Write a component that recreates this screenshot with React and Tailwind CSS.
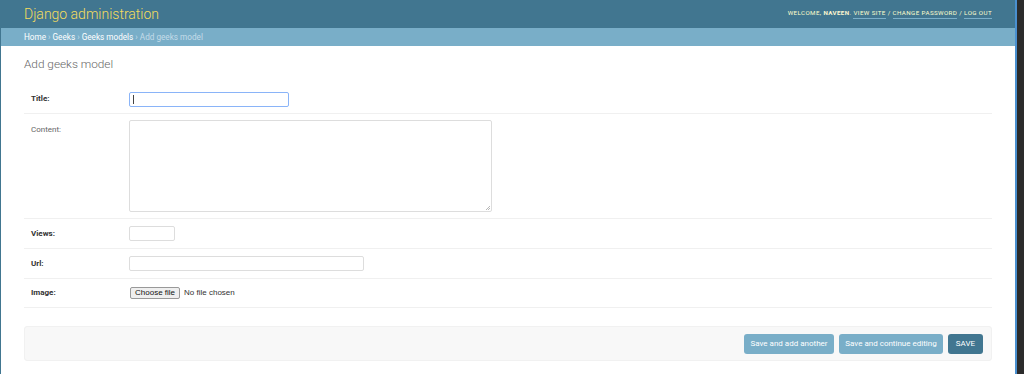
export default function App() {
  const font = { fontFamily: 'Roboto, "Liberation Sans", sans-serif' };
  return (
    <div className="flex w-[1024px] h-[374px] bg-[#2b2b2b] overflow-hidden" style={font}>
      <div className="flex flex-col w-[1015px] h-full bg-white border-l border-[#417690]">
        <div className="flex items-center justify-between h-[28px] bg-[#417690] pl-[23px] pr-[23px]">
          <div className="text-[14px] font-light text-[#f5dd5d] leading-none pb-[1px]">Django administration</div>
          <div className="text-[6.2px] tracking-[0.4px] text-[#ffc] uppercase leading-none pb-[2px]">
            WELCOME, <span className="font-bold text-[#fff8d0]">NAVEEN</span>.{' '}
            <span className="border-b border-[#79aec8] pb-[1px]">VIEW SITE</span> /{' '}
            <span className="border-b border-[#79aec8] pb-[1px]">CHANGE PASSWORD</span> /{' '}
            <span className="border-b border-[#79aec8] pb-[1px]">LOG OUT</span>
          </div>
        </div>
        <div className="flex items-center h-[18px] bg-[#79aec8] pl-[23px] text-[8.2px] text-white leading-none">
          <span>Home</span>
          <span className="mx-[2px] text-[#c4dce8]">›</span>
          <span>Geeks</span>
          <span className="mx-[2px] text-[#c4dce8]">›</span>
          <span>Geeks models</span>
          <span className="mx-[2px] text-[#c4dce8]">›</span>
          <span className="text-[#c4dce8]">Add geeks model</span>
        </div>
        <div className="flex flex-col px-[23px]">
          <div className="pt-[13px] h-[38px] text-[11.8px] font-light text-[#666] leading-none">Add geeks model</div>
          <div className="flex flex-col w-[968px]">
            <div className="flex items-center h-[30px] border-b border-[#f0f0f0] px-[7px] pt-[1px]">
              <div className="w-[98px] text-[8px] font-bold text-[#333]">Title:</div>
              <div className="w-[160px] h-[15px] border border-[#8ab4f8] rounded-[2px] flex items-center pl-[3px]">
                <div className="w-[1px] h-[9px] bg-[#444]" />
              </div>
            </div>
            <div className="flex h-[105px] border-b border-[#f0f0f0] px-[7px] pt-[6px]">
              <div className="w-[98px] text-[8px] text-[#666] pt-[4px]">Content:</div>
              <div className="relative w-[363px] h-[92px] border border-[#ddd] rounded-[2px]">
                <svg className="absolute right-[1px] bottom-[1px]" width="5" height="5" viewBox="0 0 5 5">
                  <path d="M1 5 L5 1 M3 5 L5 3" stroke="#999" strokeWidth="0.7" />
                </svg>
              </div>
            </div>
            <div className="flex items-center h-[30px] border-b border-[#f0f0f0] px-[7px]">
              <div className="w-[98px] text-[8px] font-bold text-[#333]">Views:</div>
              <div className="w-[46px] h-[15px] border border-[#ddd] rounded-[2px]" />
            </div>
            <div className="flex items-center h-[30px] border-b border-[#f0f0f0] px-[7px]">
              <div className="w-[98px] text-[8px] font-bold text-[#333]">Url:</div>
              <div className="w-[235px] h-[15px] border border-[#ddd] rounded-[2px]" />
            </div>
            <div className="flex items-center h-[29px] border-b border-[#f0f0f0] px-[7px]">
              <div className="w-[98px] text-[8px] font-bold text-[#333]">Image:</div>
              <div className="flex items-center text-[8px] text-[#333]" style={{ fontFamily: '"Liberation Sans", sans-serif' }}>
                <div className="ml-[1px] h-[12px] px-[4px] flex items-center bg-[#efefef] border border-[#999] rounded-[2px] text-[#111]">Choose file</div>
                <span className="ml-[4px]">No file chosen</span>
              </div>
            </div>
            <div className="mt-[18px] flex items-center justify-end h-[35px] bg-[#f8f8f8] rounded-[3px] border border-[#f1f1f1] pr-[8px] gap-[5px]">
              <div className="h-[20px] w-[90px] flex items-center justify-center bg-[#79aec8] rounded-[3px] text-[8px] text-white">Save and add another</div>
              <div className="h-[20px] w-[104px] flex items-center justify-center bg-[#79aec8] rounded-[3px] text-[8px] text-white">Save and continue editing</div>
              <div className="h-[20px] w-[35px] flex items-center justify-center bg-[#417690] rounded-[3px] text-[8px] text-white">SAVE</div>
            </div>
          </div>
        </div>
      </div>
      <div className="w-[2px] h-full bg-[#4a90d0]" />
    </div>
  );
}
